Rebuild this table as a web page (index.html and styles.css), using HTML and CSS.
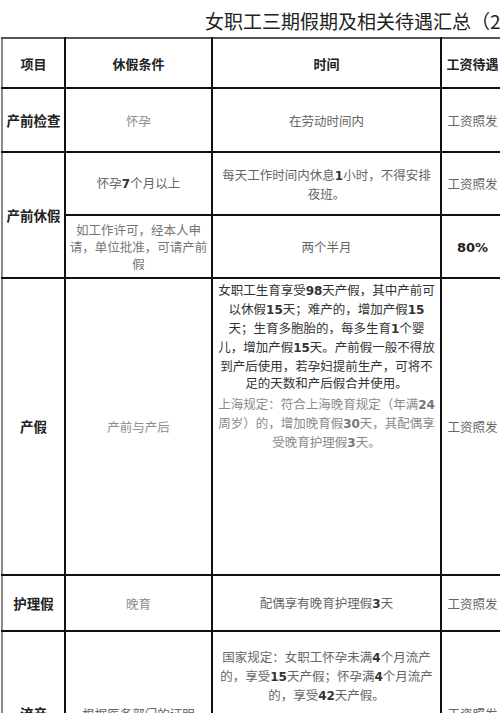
FILE: index.html
```html
<!DOCTYPE html>
<html lang="zh">
<head>
<meta charset="utf-8">
<title>女职工三期假期及相关待遇汇总</title>
<link rel="stylesheet" href="styles.css">
</head>
<body>
<div class="page">
  <h1 class="title">女职工三期假期及相关待遇汇总（2</h1>
  <table class="sheet">
    <colgroup>
      <col class="c1"><col class="c2"><col class="c3"><col class="c4">
    </colgroup>
    <tr class="r-head">
      <th>项目</th><th>休假条件</th><th>时间</th><th class="pay">工资待遇</th>
    </tr>
    <tr class="r-check">
      <td class="item">产前检查</td>
      <td class="light">怀孕</td>
      <td>在劳动时间内</td>
      <td class="pay">工资照发</td>
    </tr>
    <tr class="r-sub">
      <td class="item" rowspan="2">产前休假</td>
      <td>怀孕<span class="num">7</span>个月以上</td>
      <td>每天工作时间内休息<span class="num">1</span>小时，不得安排夜班。</td>
      <td class="pay">工资照发</td>
    </tr>
    <tr class="r-sub r-sub2">
      <td class="tight">如工作许可，经本人申请，单位批准，可请产前假</td>
      <td>两个半月</td>
      <td class="pay"><span class="num big">80%</span></td>
    </tr>
    <tr class="r-birth">
      <td class="item">产假</td>
      <td class="light">产前与产后</td>
      <td class="top">
        <p class="dark">女职工生育享受<span class="num">98</span>天产假，其中产前可以休假<span class="num">15</span>天；难产的，增加产假<span class="num">15</span>天；生育多胞胎的，每多生育<span class="num">1</span>个婴儿，增加产假<span class="num">15</span>天。产前假一般不得放到产后使用，若孕妇提前生产，可将不足的天数和产后假合并使用。</p>
        <p class="grey">上海规定：符合上海晚育规定（年满<span class="num">24</span>周岁）的，增加晚育假<span class="num">30</span>天，其配偶享受晚育护理假<span class="num">3</span>天。</p>
      </td>
      <td class="pay">工资照发</td>
    </tr>
    <tr class="r-care">
      <td class="item">护理假</td>
      <td class="light">晚育</td>
      <td>配偶享有晚育护理假<span class="num">3</span>天</td>
      <td class="pay">工资照发</td>
    </tr>
    <tr class="r-loss">
      <td class="item">流产</td>
      <td>根据医务部门的证明</td>
      <td class="top">
        <p>国家规定：女职工怀孕未满<span class="num">4</span>个月流产的，享受<span class="num">15</span>天产假；怀孕满<span class="num">4</span>个月流产的，享受<span class="num">42</span>天产假。</p>
      </td>
      <td class="pay">工资照发</td>
    </tr>
  </table>
</div>
</body>
</html>
```

FILE: styles.css
```css
html, body {
  margin: 0;
  padding: 0;
  background: #fff;
  overflow: hidden;
}
.page {
  width: 560px;
  font-family: "Noto Sans CJK SC", "Noto Sans", sans-serif;
  color: #666;
}
.title {
  margin: 0;
  padding: 9px 0 4px 205px;
  height: 24px;
  line-height: 24px;
  font-size: 19px;
  font-weight: normal;
  color: #222;
  white-space: nowrap;
}
.sheet {
  margin-left: 1px;
  border-collapse: collapse;
  table-layout: fixed;
  width: 502px;
  border-top: 2px solid #555;
  border-left: 2px solid #8a8a8a;
}
.c1 { width: 63px; }
.c2 { width: 147px; }
.c3 { width: 229px; }
.c4 { width: 63px; }
.sheet th, .sheet td {
  border: 2px solid #111;
  text-align: center;
  vertical-align: middle;
  padding: 0 4px;
  font-size: 12.5px;
  line-height: 17px;
}
.sheet th:first-child, .sheet td.item {
  border-left: 2px solid #8a8a8a;
}
.sheet tr:first-child th {
  border-top: 2px solid #555;
}
.sheet th.pay, .sheet td.pay {
  border-left: 1px solid #777;
  text-align: center;
  padding: 0;
  white-space: nowrap;
}
.sheet th {
  font-weight: bold;
  color: #222;
  font-size: 13px;
}
.sheet td.item {
  font-weight: bold;
  color: #222;
  font-size: 13.5px;
  padding: 0 2px;
}
.sheet td.tight { padding: 0 1px; }
.light { color: #8c8c8c; }
.r-head { height: 50px; }
.r-check { height: 64px; }
.r-sub { height: 63px; }
.r-sub2 td { border-top: 1px solid #444; }
.r-sub2 td:first-child { color: #777; }
.r-birth { height: 297px; }
.r-care { height: 56px; }
.r-loss { height: 165px; }
.sheet td.top {
  vertical-align: top;
  padding-top: 2px;
}
.r-loss td.top { padding-top: 16px; }
.sheet p { margin: 0; }
.dark { color: #333; }
.grey { color: #8a8a8a; margin-top: 4px !important; }
.num {
  font-family: "DejaVu Sans", "Noto Sans", sans-serif;
  font-weight: bold;
  font-size: 12px;
  color: #333;
}
.grey .num { color: #777; }
.big { font-size: 13px; color: #222; }
```
